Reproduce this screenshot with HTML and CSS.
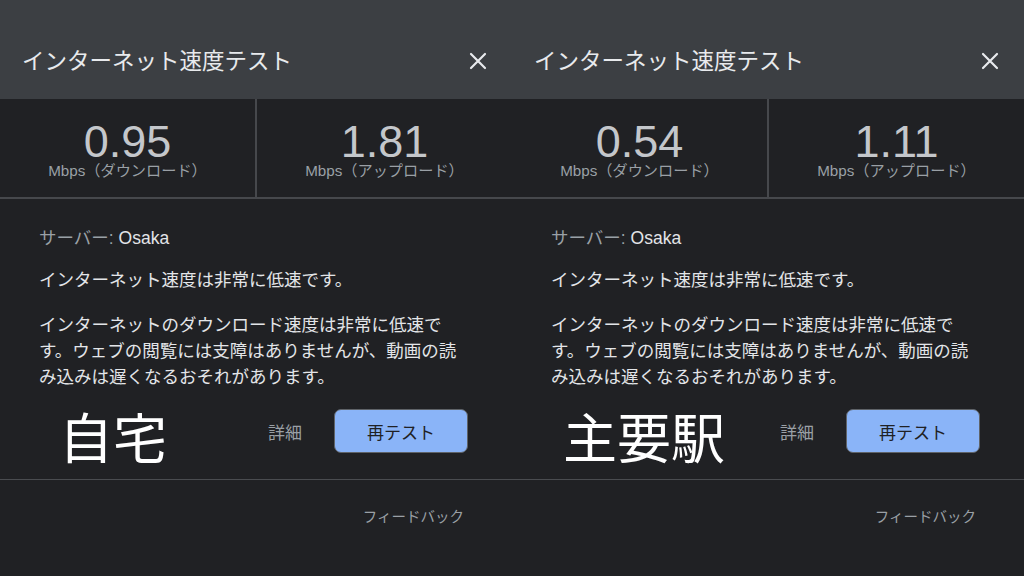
FILE: index.html
```html
<!DOCTYPE html>
<html lang="ja">
<head>
<meta charset="utf-8">
<title>インターネット速度テスト</title>
<link rel="stylesheet" href="styles.css">
</head>
<body>
<div class="screen">
  <section class="panel">
    <header class="head">
      <h1 class="title">インターネット速度テスト</h1>
      <svg class="close" viewBox="0 0 18 18" width="18" height="18"><path d="M2 2 L16 16 M16 2 L2 16" stroke="#e8eaed" stroke-width="2.2" stroke-linecap="round" fill="none"/></svg>
    </header>
    <div class="stats">
      <div class="stat"><div class="num">0.95</div><div class="unit">Mbps（ダウンロード）</div></div>
      <div class="divider"></div>
      <div class="stat"><div class="num">1.81</div><div class="unit">Mbps（アップロード）</div></div>
    </div>
    <div class="body">
      <p class="server"><span class="muted">サーバー:</span> Osaka</p>
      <p class="line2">インターネット速度は非常に低速です。</p>
      <p class="para">インターネットのダウンロード速度は非常に低速です。ウェブの閲覧には支障はありませんが、動画の読み込みは遅くなるおそれがあります。</p>
      <div class="actions">
        <span class="place place-home">自宅</span>
        <span class="details">詳細</span>
        <button class="retest">再テスト</button>
      </div>
    </div>
    <div class="foot"><span class="feedback">フィードバック</span></div>
  </section>
  <section class="panel">
    <header class="head">
      <h1 class="title">インターネット速度テスト</h1>
      <svg class="close" viewBox="0 0 18 18" width="18" height="18"><path d="M2 2 L16 16 M16 2 L2 16" stroke="#e8eaed" stroke-width="2.2" stroke-linecap="round" fill="none"/></svg>
    </header>
    <div class="stats">
      <div class="stat"><div class="num">0.54</div><div class="unit">Mbps（ダウンロード）</div></div>
      <div class="divider"></div>
      <div class="stat"><div class="num">1.11</div><div class="unit">Mbps（アップロード）</div></div>
    </div>
    <div class="body">
      <p class="server"><span class="muted">サーバー:</span> Osaka</p>
      <p class="line2">インターネット速度は非常に低速です。</p>
      <p class="para">インターネットのダウンロード速度は非常に低速です。ウェブの閲覧には支障はありませんが、動画の読み込みは遅くなるおそれがあります。</p>
      <div class="actions">
        <span class="place place-station">主要駅</span>
        <span class="details">詳細</span>
        <button class="retest">再テスト</button>
      </div>
    </div>
    <div class="foot"><span class="feedback">フィードバック</span></div>
  </section>
</div>
</body>
</html>
```
FILE: styles.css
```css
* { box-sizing: border-box; }
html, body { margin: 0; padding: 0; background: #202124; }
body {
  font-family: "Liberation Sans", "Noto Sans CJK JP", sans-serif;
  color: #e8eaed;
  width: 1024px;
  height: 576px;
  overflow: hidden;
}
.screen { display: flex; width: 1024px; height: 576px; }
.panel {
  width: 512px;
  height: 576px;
  display: flex;
  flex-direction: column;
  background: #202124;
}
.head {
  height: 99px;
  background: #3c3f43;
  display: flex;
  align-items: flex-start;
  justify-content: space-between;
  padding: 48px 25px 0 22px;
}
.title {
  margin: 0;
  font-size: 22.5px;
  font-weight: 400;
  line-height: 28px;
  color: #e8eaed;
}
.close { margin-top: 4px; display: block; }
.stats {
  height: 100px;
  display: flex;
  border-bottom: 2px solid #46484c;
}
.stat {
  flex: 1;
  text-align: center;
  padding-top: 21px;
}
.divider { width: 2px; background: #46484c; }
.num {
  font-size: 45px;
  line-height: 43px;
  color: #c4c7cb;
}
.unit {
  font-size: 15.2px;
  line-height: 16px;
  color: #9aa0a6;
}
.body {
  padding: 26px 44px 0 39px;
  height: 281px;
  border-bottom: 1px solid #4a4c50;
}
.body p {
  margin: 0;
  font-size: 17.5px;
  line-height: 26px;
  color: #e3e5e8;
}
.muted { color: #9aa0a6; }
.line2 { margin-top: 16px !important; }
.para { margin-top: 19px !important; width: 434px; }
.actions {
  height: 44px;
  margin-top: 19px;
  display: flex;
  align-items: center;
}
.place {
  align-self: flex-start;
  font-size: 54px;
  line-height: 54px;
  color: #ffffff;
  margin-top: 4px;
}
.place-home { margin-left: 20px; }
.place-station { margin-left: 12px; }
.details {
  margin-left: auto;
  font-size: 17px;
  color: #9aa0a6;
  margin-right: 32px;
}
.retest {
  width: 134px;
  height: 44px;
  border-radius: 7px;
  border: 1px solid #5f6368;
  background: #8ab4f8;
  color: #202124;
  font-family: "Liberation Sans", "Noto Sans CJK JP", sans-serif;
  font-size: 17px;
  padding: 0;
}
.foot {
  display: flex;
  justify-content: flex-end;
  padding: 27px 48px 0 0;
}
.feedback {
  font-size: 14.5px;
  line-height: 20px;
  color: #9aa0a6;
}
```
